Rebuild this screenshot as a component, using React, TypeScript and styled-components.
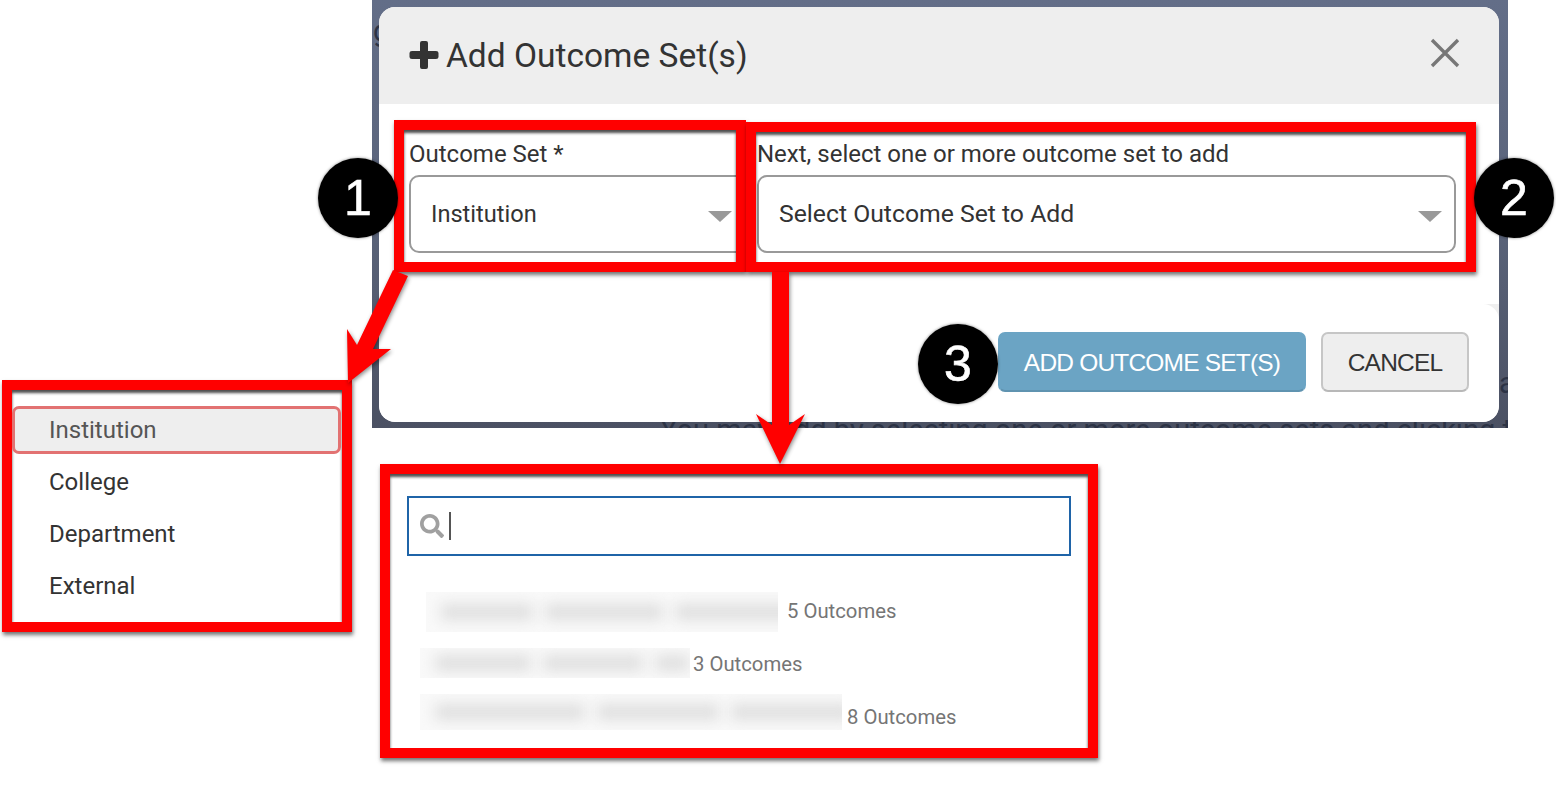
import React from "react";
import styled, { createGlobalStyle } from "styled-components";
import { FaSearch } from "react-icons/fa";

const Global = createGlobalStyle`
  html, body { margin: 0; padding: 0; background: #fff; }
  body { font-family: Roboto, "Liberation Sans", sans-serif; color: #333; }
  * { box-sizing: border-box; }
`;

const Canvas = styled.div`
  position: relative;
  width: 1556px;
  height: 790px;
  overflow: hidden;
  background: #fff;
`;

const Backdrop = styled.div`
  position: relative;
  margin-left: 372px;
  width: 1136px;
  height: 428px;
  padding: 7px 9px 6px 7px;
  overflow: hidden;
  background: linear-gradient(180deg, #636e88 0%, #596278 55%, #4b5163 100%);
`;

const BehindText = styled.span<{ $left: number; $top: number }>`
  position: absolute;
  left: ${(p) => p.$left}px;
  top: ${(p) => p.$top}px;
  font-size: 29px;
  line-height: 30px;
  white-space: nowrap;
  color: #2c3345;
`;

const Modal = styled.div`
  position: relative;
  height: 415px;
  display: flex;
  flex-direction: column;
  background: #efefef;
  border-radius: 16px;
  overflow: hidden;
`;

const Header = styled.header`
  height: 97px;
  flex: none;
  display: flex;
  align-items: center;
  justify-content: space-between;
  padding: 0 39px 0 30px;
  background: #eee;
`;

const Title = styled.h2`
  margin: 0;
  display: flex;
  align-items: center;
  gap: 7px;
  font-size: 33.5px;
  font-weight: 400;
  color: #333;
  white-space: nowrap;
`;

const PlusIcon = styled.svg`
  flex: none;
  margin-bottom: 2px;
`;

const CloseIcon = styled.svg`
  margin-bottom: 6px;
`;

const Body = styled.div`
  height: 200px;
  flex: none;
  display: flex;
  gap: 11px;
  padding: 35px 43px 0 30px;
  background: #fff;
`;

const Field = styled.div<{ $width?: number }>`
  ${(p) => (p.$width ? `width: ${p.$width}px; flex: none;` : "flex: 1;")}
`;

const Label = styled.div`
  height: 36px;
  line-height: 30px;
  font-size: 24px;
  color: #333;
  white-space: nowrap;
`;

const Select = styled.div<{ $size: number }>`
  height: 78px;
  display: flex;
  align-items: center;
  justify-content: space-between;
  padding: 0 12px 0 20px;
  border: 2px solid #999;
  border-radius: 10px;
  font-size: ${(p) => p.$size}px;
  line-height: 30px;
  color: #333;
`;

const Caret = styled.i`
  width: 0;
  height: 0;
  margin-top: 4px;
  border-left: 12px solid transparent;
  border-right: 12px solid transparent;
  border-top: 11px solid #999;
`;

const Footer = styled.footer`
  flex: 1;
  display: flex;
  justify-content: flex-end;
  align-items: flex-start;
  gap: 15px;
  padding: 28px 30px 0 0;
  background: #fff;
  border-radius: 0 16px 16px 16px;
`;

const Button = styled.button<{ $primary?: boolean }>`
  height: 60px;
  font-family: "Liberation Sans", Arial, sans-serif;
  font-size: 24.5px;
  letter-spacing: -0.81px;
  border-radius: 7px;
  cursor: pointer;
  color: ${(p) => (p.$primary ? "#fff" : "#333")};
  background: ${(p) => (p.$primary ? "#6ba4c4" : "#eee")};
  border: 2px solid ${(p) => (p.$primary ? "#6ba4c4" : "#c6c6c6")};
  border-bottom-color: ${(p) => (p.$primary ? "#5f93b0" : "#b8b8b8")};
  width: ${(p) => (p.$primary ? 308 : 148)}px;
  padding: 2px 0 0;
`;

const Frame = styled.div<{ $x: number; $y: number; $w: number; $h: number }>`
  position: absolute;
  left: ${(p) => p.$x}px;
  top: ${(p) => p.$y}px;
  width: ${(p) => p.$w}px;
  height: ${(p) => p.$h}px;
  border: 10px solid #ff0000;
  box-shadow: 1px 3px 4px rgba(0, 0, 0, 0.55), inset 0 3px 3px rgba(0, 0, 0, 0.7);
`;

const Panel = styled(Frame)`
  background: #fff;
`;

const OptionList = styled.ul`
  list-style: none;
  margin: 0;
  padding: 16px 1px 0 0;
`;

const Option = styled.li<{ $active?: boolean }>`
  height: 48px;
  margin-bottom: 4px;
  display: flex;
  align-items: center;
  padding-left: ${(p) => (p.$active ? 34 : 37)}px;
  font-size: 24px;
  color: ${(p) => (p.$active ? "#555" : "#333")};
  background: ${(p) => (p.$active ? "#eee" : "transparent")};
  border: ${(p) => (p.$active ? "3px solid #e27272" : "none")};
  border-radius: 7px;
`;

const SearchBody = styled.div`
  padding: 22px 17px 0;
`;

const SearchBox = styled.div`
  height: 60px;
  display: flex;
  align-items: center;
  gap: 5px;
  padding-left: 11px;
  border: 2px solid #1f64a8;
`;

const SearchCaret = styled.span`
  width: 2px;
  height: 28px;
  background: #555;
`;

const ResultRow = styled.div<{ $top: number; $indent: number; $gap: number }>`
  height: 40px;
  margin-top: ${(p) => p.$top}px;
  margin-left: ${(p) => p.$indent}px;
  display: flex;
  align-items: center;
  gap: ${(p) => p.$gap}px;
`;

const BlurBlock = styled.div<{ $w: number; $h: number; $lift: number }>`
  width: ${(p) => p.$w}px;
  height: ${(p) => p.$h}px;
  margin-bottom: ${(p) => p.$lift}px;
  flex: none;
  display: flex;
  align-items: center;
  gap: 12px;
  padding-left: 15px;
  overflow: hidden;
  background: #f9f9f9;
`;

const Smudge = styled.span<{ $w: number }>`
  width: ${(p) => p.$w}px;
  height: 16px;
  flex: none;
  background: #dfdfdf;
  filter: blur(7px);
`;

const Count = styled.span`
  font-size: 20.3px;
  color: #757575;
  white-space: nowrap;
`;

const Arrows = styled.svg`
  position: absolute;
  left: 0;
  top: 0;
  overflow: visible;
  filter: drop-shadow(1px 2px 2px rgba(0, 0, 0, 0.45));
`;

const Badge = styled.div<{ $x: number; $y: number }>`
  position: absolute;
  left: ${(p) => p.$x - 40}px;
  top: ${(p) => p.$y - 40}px;
  width: 80px;
  height: 80px;
  display: flex;
  align-items: center;
  justify-content: center;
  border-radius: 50%;
  background: #000;
  color: #fff;
  font-family: "Liberation Sans", Arial, sans-serif;
  font-size: 50px;
  -webkit-text-stroke: 0.6px #fff;
  box-shadow: 0 0 3px rgba(0, 0, 0, 0.5);
`;

const results = [
  { top: 35, indent: 19, gap: 9, w: 352, h: 40, lift: -2, count: "5 Outcomes", parts: [92, 118, 120] },
  { top: 13, indent: 13, gap: 3, w: 270, h: 30, lift: 2, count: "3 Outcomes", parts: [96, 100, 34] },
  { top: 13, indent: 13, gap: 5, w: 422, h: 36, lift: 10, count: "8 Outcomes", parts: [150, 122, 120] },
];

export default function App() {
  return (
    <>
      <Global />
      <Canvas>
        <Backdrop>
          <BehindText $left={1} $top={16}>g</BehindText>
          <BehindText $left={288} $top={415}>
            You may add by selecting one or more outcome sets and clicking the
          </BehindText>
          <BehindText $left={1127} $top={368}>a</BehindText>
          <Modal>
            <Header>
              <Title>
                <PlusIcon width="30" height="30" viewBox="0 0 30 30" aria-hidden="true">
                  <path
                    fill="#333"
                    d="M13 1H17Q19 1 19 3V11H27Q29.5 11 29.5 13V17Q29.5 19 27 19H19V27Q19 29 17 29H13Q11 29 11 27V19H3Q0.5 19 0.5 17V13Q0.5 11 3 11H11V3Q11 1 13 1Z"
                  />
                </PlusIcon>
                Add Outcome Set(s)
              </Title>
              <CloseIcon width="30" height="30" viewBox="0 0 30 30" aria-hidden="true">
                <path d="M2 2L28 28M28 2L2 28" stroke="#777" strokeWidth="3.4" fill="none" />
              </CloseIcon>
            </Header>
            <Body>
              <Field $width={337}>
                <Label>Outcome Set *</Label>
                <Select $size={23.6}>
                  Institution
                  <Caret />
                </Select>
              </Field>
              <Field>
                <Label>Next, select one or more outcome set to add</Label>
                <Select $size={24.75}>
                  Select Outcome Set to Add
                  <Caret />
                </Select>
              </Field>
            </Body>
            <Footer>
              <Button $primary>ADD OUTCOME SET(S)</Button>
              <Button>CANCEL</Button>
            </Footer>
          </Modal>
        </Backdrop>

        <Frame $x={394} $y={120} $w={352} $h={152} />
        <Frame $x={746} $y={122} $w={730} $h={150} />

        <Panel $x={2} $y={380} $w={350} $h={252}>
          <OptionList>
            <Option $active>Institution</Option>
            <Option>College</Option>
            <Option>Department</Option>
            <Option>External</Option>
          </OptionList>
        </Panel>

        <Panel $x={380} $y={464} $w={718} $h={294}>
          <SearchBody>
            <SearchBox>
              <FaSearch size={24} color="#a0a0a0" />
              <SearchCaret />
            </SearchBox>
            {results.map((r) => (
              <ResultRow key={r.count} $top={r.top} $indent={r.indent} $gap={r.gap}>
                <BlurBlock $w={r.w} $h={r.h} $lift={r.lift}>
                  {r.parts.map((w, i) => (
                    <Smudge key={i} $w={w} />
                  ))}
                </BlurBlock>
                <Count>{r.count}</Count>
              </ResultRow>
            ))}
          </SearchBody>
        </Panel>

        <Arrows width="1556" height="790" viewBox="0 0 1556 790" aria-hidden="true">
          <polygon fill="#ff0000" points="393,270 408,276 373,349 391,349 348,383 347,329 357,345" />
          <polygon fill="#ff0000" points="772,272 789,272 789,425 805,414 780,464 756,414 772,425" />
        </Arrows>

        <Badge $x={358} $y={198}>1</Badge>
        <Badge $x={1514} $y={198}>2</Badge>
        <Badge $x={958} $y={364}>3</Badge>
      </Canvas>
    </>
  );
}
